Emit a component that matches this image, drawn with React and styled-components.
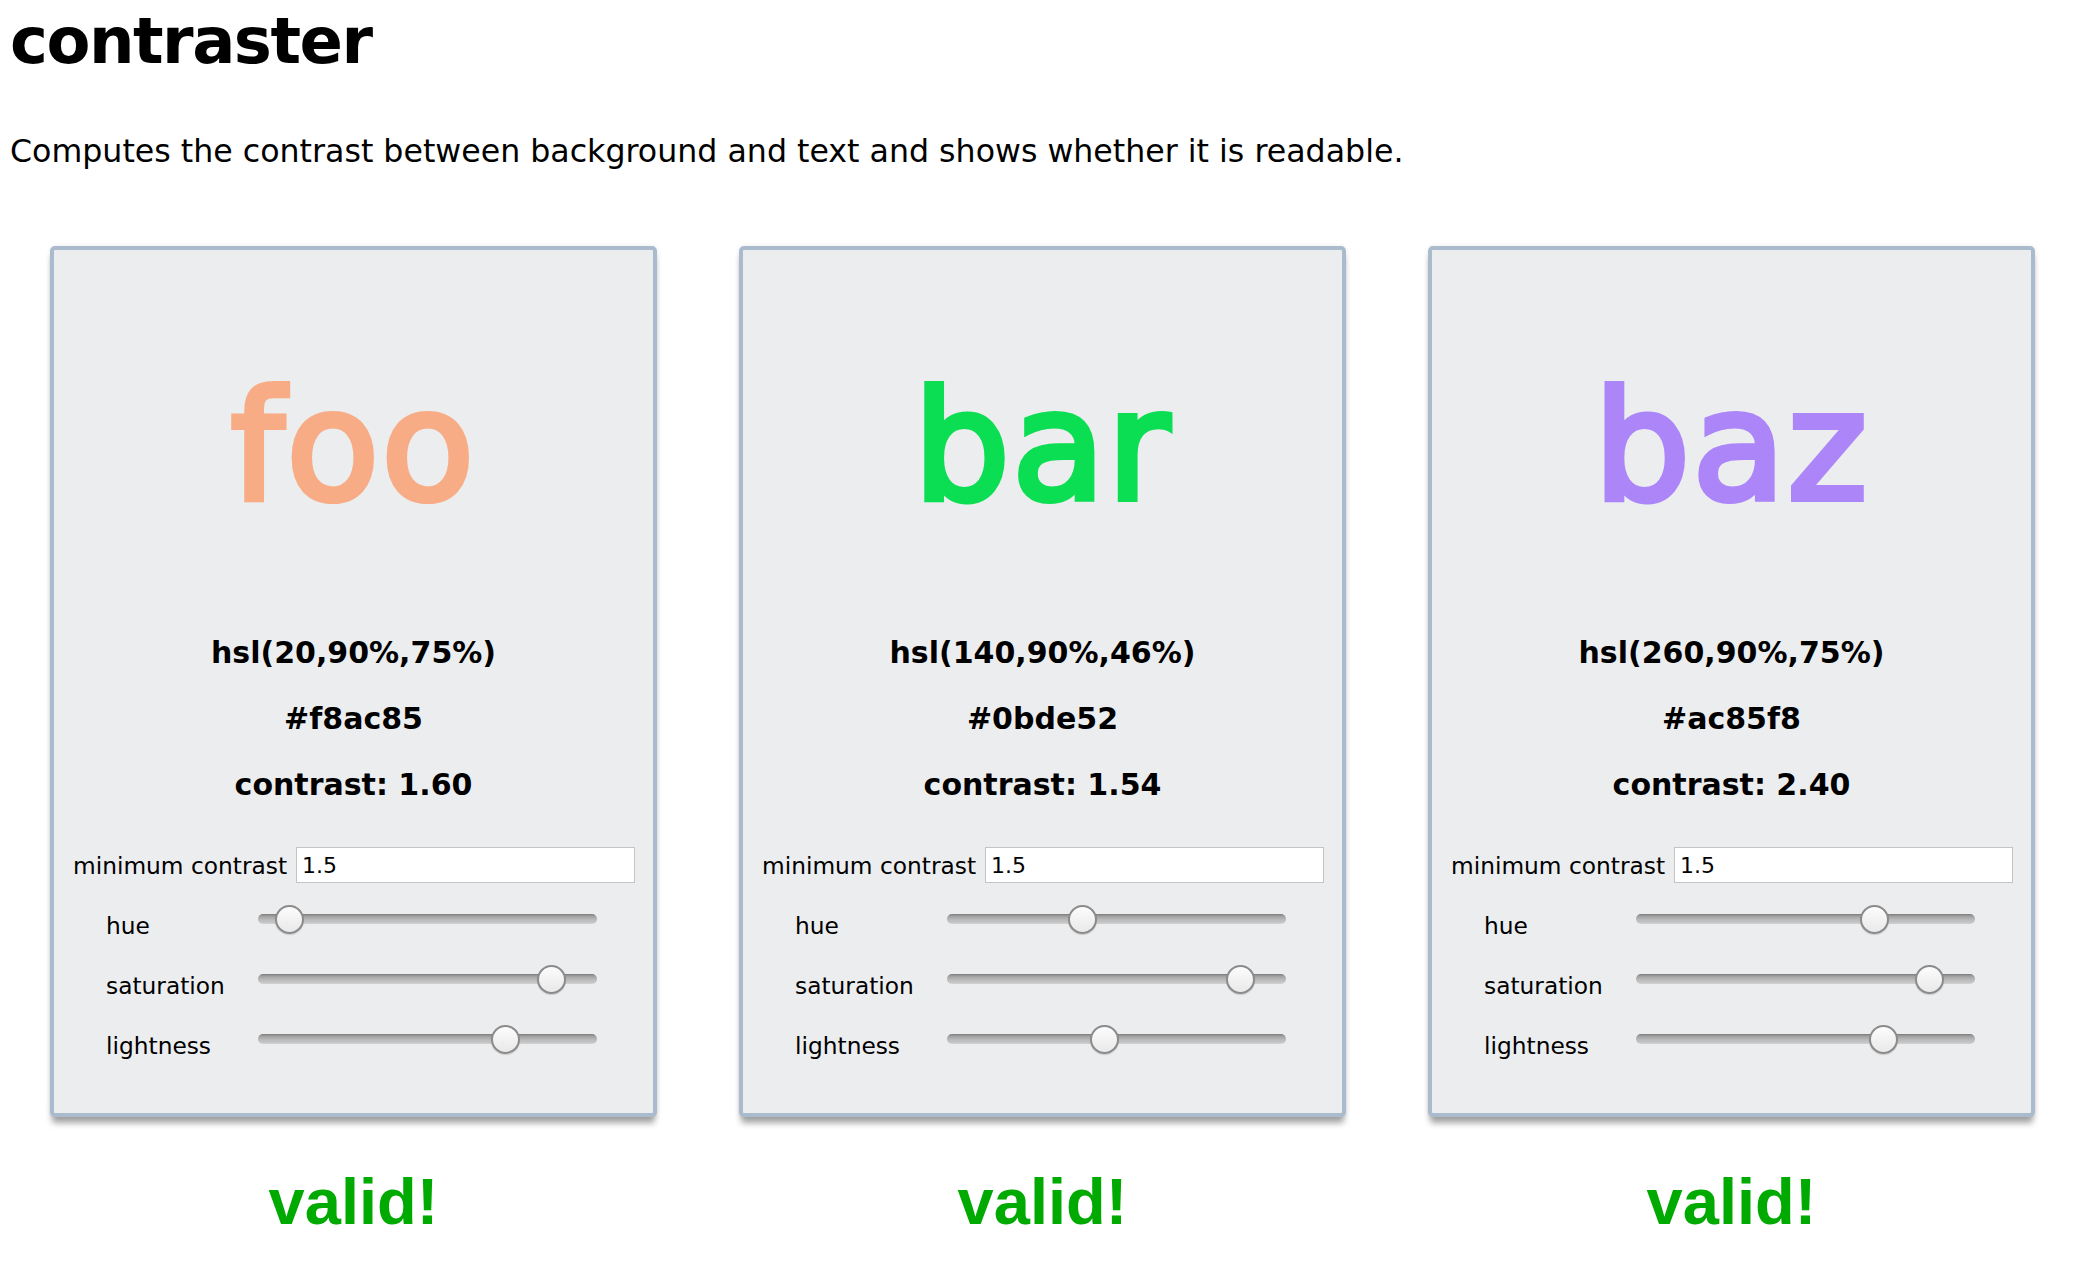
import React from "react";
import styled, { createGlobalStyle } from "styled-components";

const GlobalStyle = createGlobalStyle`
  html, body {
    margin: 0;
    padding: 0;
    background: #ffffff;
  }
  body {
    font-family: "DejaVu Sans", "Noto Sans", sans-serif;
    color: #000000;
  }
`;

const Page = styled.main`
  padding: 9px 10px 40px 10px;
`;

const Title = styled.h1`
  margin: 0;
  font-size: 64px;
  line-height: 64px;
  font-weight: 700;
  letter-spacing: -1.5px;
`;

const Lead = styled.p`
  margin: 58px 0 0;
  font-size: 31.65px;
  line-height: 40px;
`;

const CardRow = styled.div`
  display: flex;
  gap: 82px;
  margin: 75px 0 0 40px;
`;

const Column = styled.section`
  width: 607px;
  display: flex;
  flex-direction: column;
`;

const Card = styled.div`
  box-sizing: border-box;
  width: 607px;
  padding: 97px 0 44px;
  background: #ecedef;
  border: 4px solid #a9bbcc;
  border-radius: 5px;
  box-shadow: 0 8px 6px -2px rgba(0, 0, 0, 0.36), 0 0 5px rgba(0, 0, 0, 0.08);
`;

const Sample = styled.div`
  height: 200px;
  font-size: 152px;
  line-height: 200px;
  text-align: center;
  letter-spacing: 2px;
  color: ${(p) => p.$color};
  -webkit-text-stroke: 6px ${(p) => p.$color};
`;

const Info = styled.div`
  margin-top: 73px;
  display: flex;
  flex-direction: column;
`;

const InfoLine = styled.div`
  height: 66px;
  font-size: 30px;
  font-weight: 700;
  line-height: 66px;
  text-align: center;
`;

const MinRow = styled.label`
  display: flex;
  align-items: center;
  margin-top: 29px;
  padding-left: 19px;
  height: 36px;
`;

const MinLabel = styled.span`
  width: 223px;
  font-size: 23.3px;
  white-space: nowrap;
`;

const MinInput = styled.input`
  box-sizing: border-box;
  width: 339px;
  height: 36px;
  margin: 0;
  padding: 0 5px;
  border: 1px solid #c4c4c4;
  background: #ffffff;
  font-family: "DejaVu Sans", sans-serif;
  font-size: 22px;
  color: #000;
  outline: none;
`;

const Sliders = styled.div`
  margin-top: 6px;
  display: flex;
  flex-direction: column;
`;

const SliderRow = styled.label`
  display: grid;
  grid-template-columns: 152px 339px;
  align-items: center;
  height: 60px;
  padding-left: 52px;
`;

const SliderLabel = styled.span`
  font-size: 23.3px;
  margin-top: 12px;
`;

const Range = styled.input`
  -webkit-appearance: none;
  appearance: none;
  width: 339px;
  height: 30px;
  margin: 0;
  background: transparent;

  &::-webkit-slider-runnable-track {
    height: 10px;
    border-radius: 5px;
    background: linear-gradient(#7a7a7a 0px, #9e9e9e 2px, #b6b6b6 5px, #c9c9c9 9px, #d6d6d6 10px);
  }

  &::-webkit-slider-thumb {
    -webkit-appearance: none;
    appearance: none;
    box-sizing: border-box;
    width: 29px;
    height: 29px;
    margin-top: -9.5px;
    border-radius: 50%;
    border: 2px solid #8b8b8b;
    background: linear-gradient(#fdfdfd, #f2f2f2 50%, #e9e9e9);
    box-shadow: 0 1px 1px rgba(0, 0, 0, 0.15);
  }
`;

const Verdict = styled.div`
  margin-top: 45px;
  font-family: "Liberation Sans", Arial, sans-serif;
  font-size: 65px;
  font-weight: 700;
  line-height: 80px;
  text-align: center;
  color: #00aa00;
`;

const samples = [
  { word: "foo", h: 20, s: 90, l: 75, hex: "#f8ac85", contrast: "1.60" },
  { word: "bar", h: 140, s: 90, l: 46, hex: "#0bde52", contrast: "1.54" },
  { word: "baz", h: 260, s: 90, l: 75, hex: "#ac85f8", contrast: "2.40" },
];

function Contraster({ sample }) {
  const { word, h, s, l, hex, contrast } = sample;
  return (
    <Column>
      <Card>
        <Sample $color={hex}>{word}</Sample>
        <Info>
          <InfoLine>{`hsl(${h},${s}%,${l}%)`}</InfoLine>
          <InfoLine>{hex}</InfoLine>
          <InfoLine>{`contrast: ${contrast}`}</InfoLine>
        </Info>
        <MinRow>
          <MinLabel>minimum contrast</MinLabel>
          <MinInput type="text" defaultValue="1.5" />
        </MinRow>
        <Sliders>
          <SliderRow>
            <SliderLabel>hue</SliderLabel>
            <Range type="range" min="0" max="360" defaultValue={h} />
          </SliderRow>
          <SliderRow>
            <SliderLabel>saturation</SliderLabel>
            <Range type="range" min="0" max="100" defaultValue={s} />
          </SliderRow>
          <SliderRow>
            <SliderLabel>lightness</SliderLabel>
            <Range type="range" min="0" max="100" defaultValue={l} />
          </SliderRow>
        </Sliders>
      </Card>
      <Verdict>valid!</Verdict>
    </Column>
  );
}

export default function App() {
  return (
    <>
      <GlobalStyle />
      <Page>
        <Title>contraster</Title>
        <Lead>
          Computes the contrast between background and text and shows whether it is readable.
        </Lead>
        <CardRow>
          {samples.map((s) => (
            <Contraster key={s.word} sample={s} />
          ))}
        </CardRow>
      </Page>
    </>
  );
}
